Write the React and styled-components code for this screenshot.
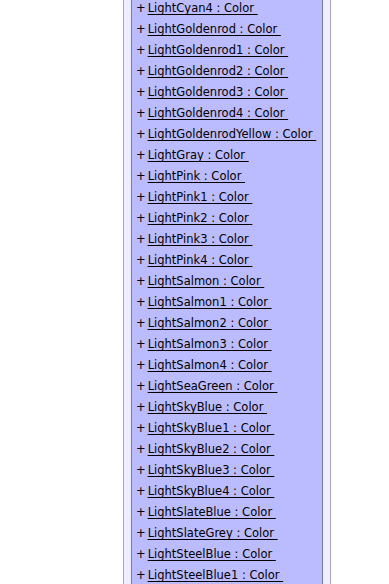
import React from "react";
import styled, { createGlobalStyle } from "styled-components";

const GlobalStyle = createGlobalStyle`
	html, body {
		margin: 0;
		padding: 0;
		background: #fff;
		overflow: hidden;
	}
`;

const Page = styled.div`
	width: 389px;
	height: 584px;
	overflow: hidden;
	padding-left: 123px;
	box-sizing: border-box;
	font-family: "DejaVu Sans", sans-serif;
	font-size: 11.5px;
	color: #000;
`;

const OuterBox = styled.div`
	width: 208px;
	height: 584px;
	box-sizing: border-box;
	border: 1px solid #a8a8b8;
	border-top: none;
	border-bottom: none;
	background: #eeeeff;
	padding: 0 7px;
`;

const InnerBox = styled.div`
	box-sizing: border-box;
	height: 584px;
	border: 1px solid #7a7aa8;
	border-top: none;
	border-bottom: none;
	background: #bbbbff;
	padding: 0 4px;
	display: flex;
	flex-direction: column;
	overflow: hidden;
`;

const List = styled.div`
	margin-top: -2px;
	display: flex;
	flex-direction: column;
`;

const Row = styled.div`
	height: 21px;
	line-height: 21px;
	white-space: pre;
`;

const Plus = styled.span`
	margin-right: 2px;
`;

const Member = styled.a`
	color: #000;
	text-decoration: underline;
	text-underline-offset: 2px;
`;

const names = [
	"LightCyan4",
	"LightGoldenrod",
	"LightGoldenrod1",
	"LightGoldenrod2",
	"LightGoldenrod3",
	"LightGoldenrod4",
	"LightGoldenrodYellow",
	"LightGray",
	"LightPink",
	"LightPink1",
	"LightPink2",
	"LightPink3",
	"LightPink4",
	"LightSalmon",
	"LightSalmon1",
	"LightSalmon2",
	"LightSalmon3",
	"LightSalmon4",
	"LightSeaGreen",
	"LightSkyBlue",
	"LightSkyBlue1",
	"LightSkyBlue2",
	"LightSkyBlue3",
	"LightSkyBlue4",
	"LightSlateBlue",
	"LightSlateGrey",
	"LightSteelBlue",
	"LightSteelBlue1",
];

export default function App() {
	return (
		<>
			<GlobalStyle />
			<Page>
				<OuterBox>
					<InnerBox>
						<List>
							{names.map((n) => (
								<Row key={n}>
									<Plus>+</Plus>
									<Member>{`${n} : Color `}</Member>
								</Row>
							))}
						</List>
					</InnerBox>
				</OuterBox>
			</Page>
		</>
	);
}
